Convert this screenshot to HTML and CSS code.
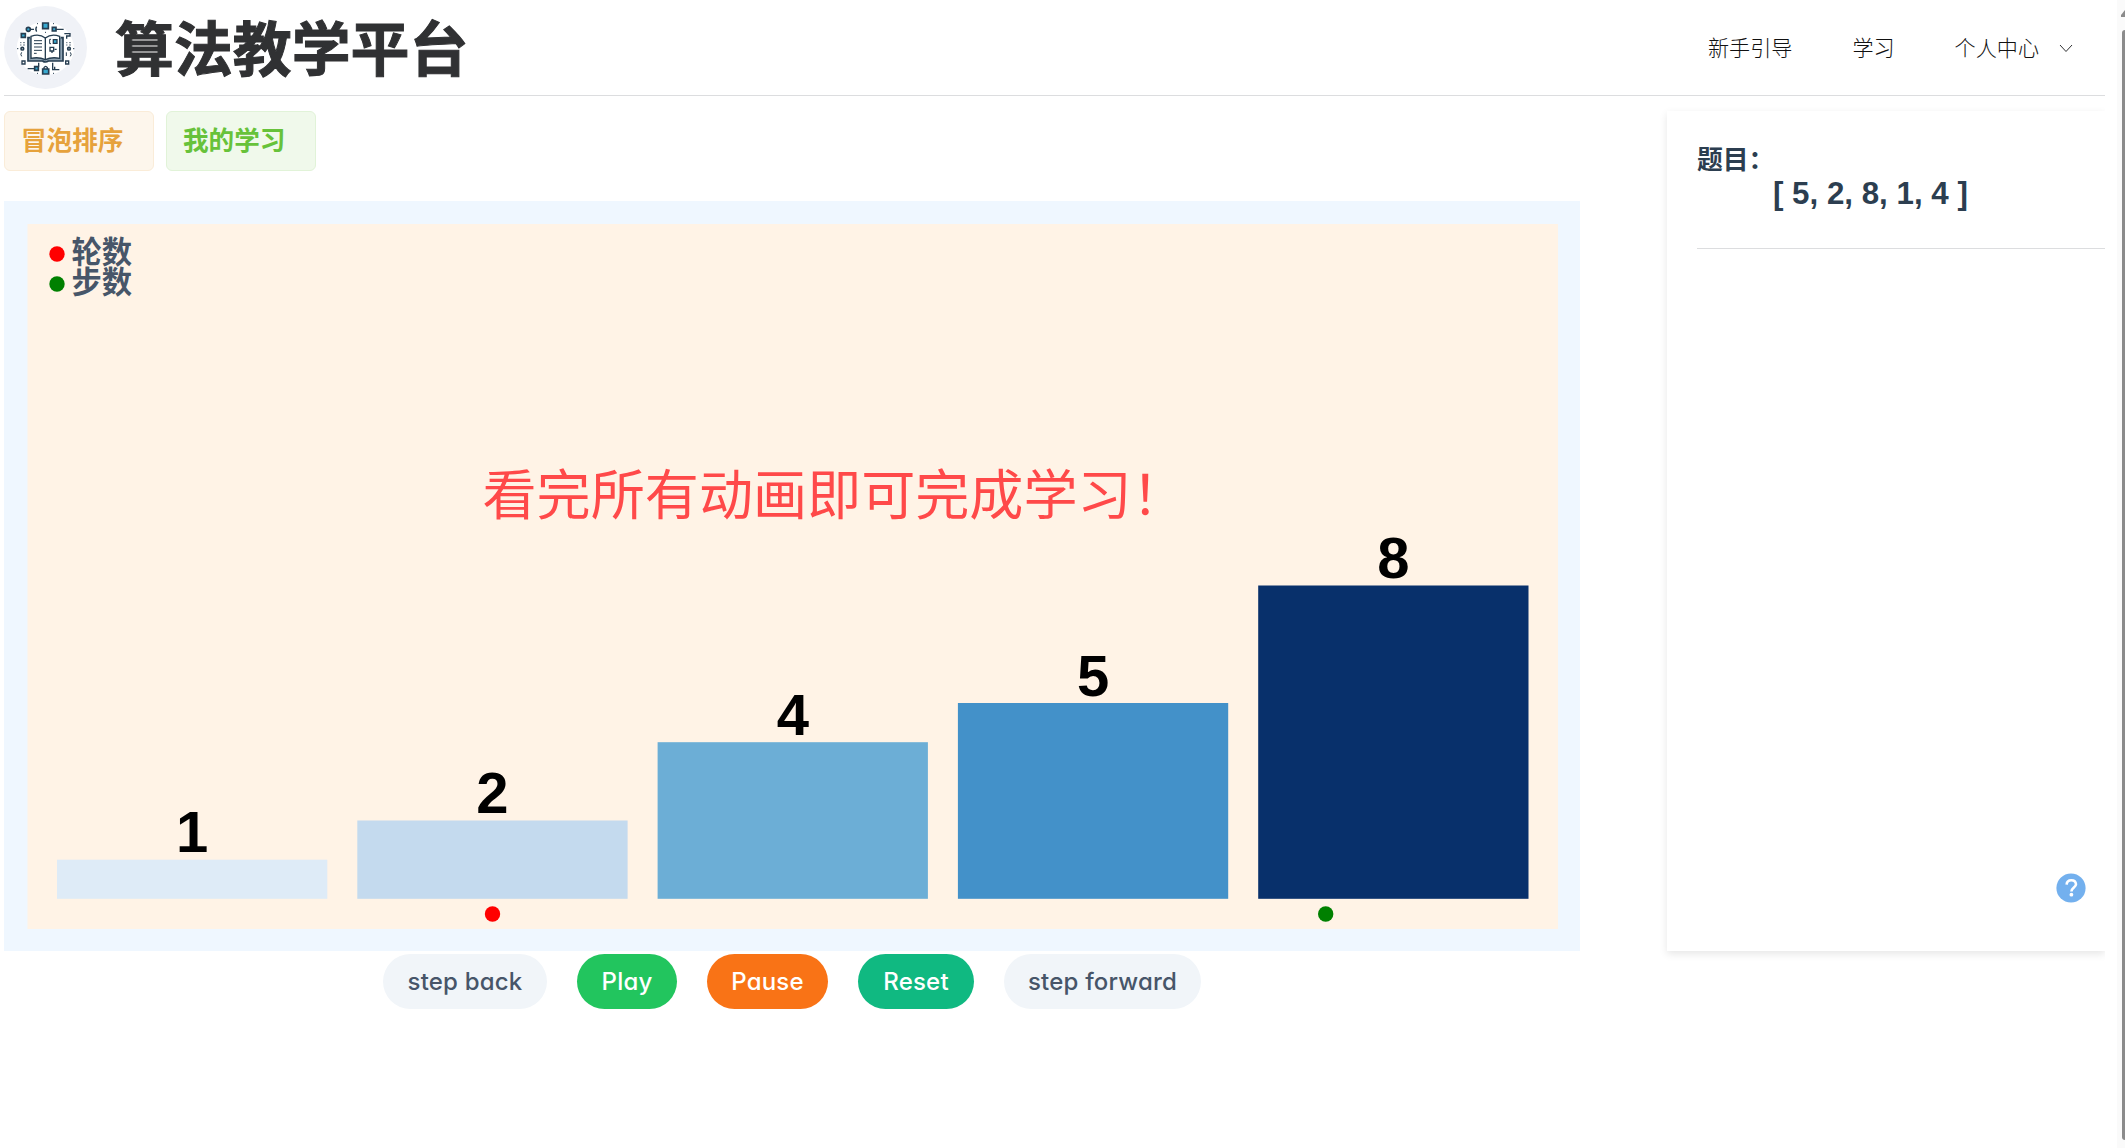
FILE: index.html
```html
<!DOCTYPE html>
<html lang="zh-CN">
<head>
<meta charset="utf-8">
<title>算法教学平台</title>
<link rel="stylesheet" href="styles.css">
</head>
<body>
<div class="page">
  <header class="header">
    <svg class="logo" viewBox="12 18 249 249">
      <circle cx="136.500" cy="142.500" r="124.500" fill="#f0f2f7"/>
      <ellipse cx="136" cy="145" rx="86" ry="80" fill="#fff"/>
      <g fill="none" stroke="#263d50" stroke-width="5">
        <path d="M91 113h-7v70h44q8 6 17 0h44v-70h-7" fill="#8fa3b3"/>
        <path d="M136 114q-18-14-43-5v66q24-5 43 4 19-9 43-4v-66q-25-9-43 5z" fill="#fff" stroke-width="4"/>
        <path d="M136 114v64" stroke-width="4"/>
        <path d="M102 122h24M102 131h24M102 141h24M102 151h24M102 160h8M153 118h-4v13h4" stroke-width="3"/>
        <path d="M150 142h11v11h-11zM156 153v6M164 148h6" stroke-width="4"/>
        <path d="M160 119h11v11h-11z" fill="#38a9cf" stroke-width="4"/>
        <path d="M128 69h17v17h-17zM157 82h11v11h-11zM64 101h12v11H64zM104 200h11v11h-11zM128 207h18v15h-18z" fill="#38a9cf"/>
        <circle cx="85" cy="88" r="6" fill="#38a9cf"/>
        <path d="M132 207v-4q5-8 10 0v4M91 88h11M110 80q-5 8 0 15M168 88h23M193 101h17v7h-10v8M83 206h21M116 188v12M158 188v21h20M164 200v9" stroke-width="4"/>
        <path d="M66 183h9v9h-9zM197 183h9v9h-9z" stroke-width="4"/>
        <circle cx="67" cy="146" r="4"/><circle cx="207" cy="146" r="4"/>
        <path d="M65 157q-5 6 0 12M211 157q5 6 0 12M199 157v11" stroke-width="3"/>
        <path d="M61 128h3M70 128h4M61 135h3M70 135h4M51 146h4M199 128h3M208 128h4M199 135h3M208 135h4M219 146h4M111 71h3M159 71h3M111 220h3M159 220h3M135 97h3" stroke-width="3"/>
      </g>
    </svg>
    <h1 class="brand">算法教学平台</h1>
    <nav class="nav">
      <span>新手引导</span>
      <span>学习</span>
      <span class="menu">个人中心
        <svg class="chevron" viewBox="0 0 14 9"><path d="M1 1l6 6.500L13 1" fill="none" stroke="#303133" stroke-width="1"/></svg>
      </span>
    </nav>
  </header>

  <div class="body">
    <main class="main">
      <div class="tags">
        <span class="tag tag-warning">冒泡排序</span>
        <span class="tag tag-success">我的学习</span>
      </div>
      <section class="stage">
        <svg class="chart" viewBox="27 224 1531 705">
          <rect x="27.500" y="224" width="1530.500" height="705" fill="#fff3e6"/>
          <g class="legend">
            <circle cx="57" cy="254" r="7.700" fill="red"/>
            <text x="71.500" y="262.500">轮数</text>
            <circle cx="57" cy="284" r="7.700" fill="green"/>
            <text x="71.500" y="292.500">步数</text>
          </g>
          <rect x="57" y="859.700" width="270.300" height="39.100" fill="#deebf7"/>
          <rect x="357.300" y="820.500" width="270.300" height="78.300" fill="#c4daee"/>
          <rect x="657.600" y="742.200" width="270.300" height="156.600" fill="#6caed6"/>
          <rect x="957.900" y="703" width="270.300" height="195.800" fill="#4391c9"/>
          <rect x="1258.200" y="585.500" width="270.300" height="313.300" fill="#08306b"/>
          <g class="values">
            <text x="192.200" y="852">1</text>
            <text x="492.500" y="813">2</text>
            <text x="792.800" y="734.500">4</text>
            <text x="1093.100" y="695.500">5</text>
            <text x="1393.400" y="578">8</text>
          </g>
          <circle cx="492.500" cy="914" r="7.700" fill="red"/>
          <circle cx="1325.700" cy="914" r="7.700" fill="green"/>
          <text class="notice" x="482.500" y="514.500">看完所有动画即可完成学习！</text>
        </svg>
      </section>
      <div class="controls">
        <button class="btn w-back">step back</button>
        <button class="btn play">Play</button>
        <button class="btn pause">Pause</button>
        <button class="btn reset">Reset</button>
        <button class="btn w-forward">step forward</button>
      </div>
    </main>
    <div class="aside-clip">
      <aside class="aside">
        <div class="question">
          <div class="question-title">题目：</div>
          <div class="question-data">[ 5, 2, 8, 1, 4 ]</div>
        </div>
        <svg class="help" viewBox="0 0 30 30">
          <circle cx="15" cy="15" r="14.600" fill="#73b0ee"/>
          <path d="M10.600 11.600q.3-4.300 4.700-4.300t4.700 4c0 3.200-4.600 3.400-4.600 7.300" fill="none" stroke="#fff" stroke-width="2.600"/>
          <circle cx="15.400" cy="21.700" r="1.900" fill="#fff"/>
        </svg>
      </aside>
    </div>
  </div>
</div>
<div class="scrollbar">
  <svg class="scroll-arrow" viewBox="0 0 4 8"><path d="M4 0v7H0V5z" fill="#8b8b8b"/></svg>
  <div class="thumb"></div>
</div>
</body>
</html>
```
FILE: styles.css
```css
* { box-sizing: border-box; }
body {
  margin: 0;
  height: 1148px;
  overflow: hidden;
  display: flex;
  background: #fff;
  color: #303133;
  font-family: "Liberation Sans", "Noto Sans CJK SC", sans-serif;
}
.page { width: 2117px; padding: 0 12px 0 4px; }
.header {
  height: 96px;
  border-bottom: 1px solid #dcdddf;
  display: flex;
  align-items: center;
}
.logo { width: 83px; height: 83px; flex: none; }
.brand {
  margin: 0 0 4px 28px;
  font: 700 58.900px/86px "Noto Sans CJK SC", sans-serif;
  -webkit-text-stroke: 1px #303133;
}
.nav {
  margin-left: auto;
  margin-bottom: 1px;
  padding-right: 32px;
  display: flex;
  gap: 60px;
  color: #111;
  font: 300 21.100px/30px "Noto Sans CJK SC", sans-serif;
}
.menu { display: flex; align-items: center; gap: 20px; }
.chevron { width: 14px; height: 9px; margin-top: 2px; }
.body { display: flex; justify-content: space-between; }
.main { width: 1576px; padding-top: 15px; }
.tags { display: flex; gap: 12px; height: 60px; }
.tag {
  width: 150px;
  padding-left: 16px;
  border: 1px solid;
  border-radius: 6px;
  font: 700 25.600px/54px "Noto Sans CJK SC", sans-serif;
}
.tag-warning { color: #e6a23c; background: #fdf6ec; border-color: #faecd8; }
.tag-success { color: #67c23a; background: #f0f9eb; border-color: #e1f3d8; }
.stage {
  margin-top: 30px;
  height: 750px;
  padding: 23px 22px 22px 23px;
  background: #eff7ff;
}
.chart { display: block; width: 1531px; height: 705px; }
.legend text { font: 700 30.300px "Noto Sans CJK SC", sans-serif; fill: #475669; }
.values text { font: 700 58px "Liberation Sans", sans-serif; text-anchor: middle; }
.notice { font: 400 54.100px "Noto Sans CJK SC", sans-serif; fill: #ff4949; }
.controls { display: flex; justify-content: center; gap: 30px; padding-top: 3px; }
.btn {
  height: 55px;
  width: 164px;
  padding: 0;
  border: 0;
  border-radius: 28px;
  background: #f1f5f9;
  color: #475569;
  font: 500 24px/55px Inter, sans-serif;
  font-feature-settings: "cv11";
  letter-spacing: .2px;
  white-space: nowrap;
}
.w-forward { width: 197px; }
.play { width: 100px; background: #22c55e; color: #fff; }
.pause { width: 121px; background: #f97316; color: #fff; }
.reset { width: 116px; background: #10b981; color: #fff; }
.aside-clip { width: 448px; padding: 15px 0 20px 10px; overflow: hidden; }
.aside {
  height: 840px;
  padding: 28px 0 0 30px;
  display: flex;
  flex-direction: column;
  color: #2c3e50;
  box-shadow: 0 3px 8px rgba(0, 0, 0, .1);
}
.question { height: 110px; border-bottom: 1px solid #dcdddf; font-weight: 700; }
.question-title { font: 700 25.800px/37px "Noto Sans CJK SC", sans-serif; }
.question-data { padding: 2px 0 0 76px; font-size: 31.300px; line-height: 32px; }
.help { width: 30px; height: 30px; margin: auto 19px 48px auto; }
.scrollbar { width: 8px; height: 1148px; padding-top: 10px; background: #fafafa; display: flex; flex-direction: column; align-items: flex-end; }
.scroll-arrow { width: 4px; height: 8px; }
.thumb { width: 3px; height: 1110px; margin-top: 12px; background: #8b8b8b; border-radius: 3px 0 0 3px; }
```
